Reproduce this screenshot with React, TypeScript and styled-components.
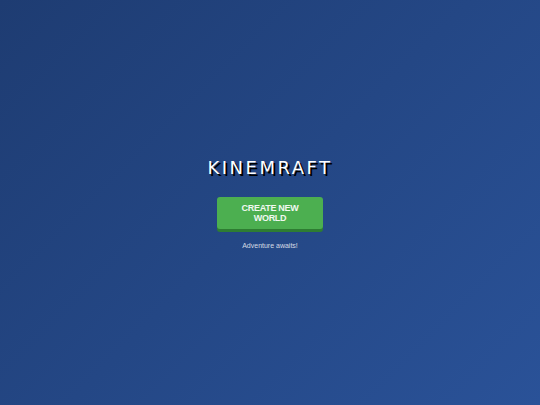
import styled, { createGlobalStyle } from "styled-components";

const GlobalStyle = createGlobalStyle`
  html, body {
    margin: 0;
    padding: 0;
    height: 100%;
  }
  #root {
    height: 100%;
  }
`;

const Screen = styled.div`
  width: 100%;
  height: 100vh;
  display: flex;
  flex-direction: column;
  align-items: center;
  justify-content: center;
  background: linear-gradient(135deg, #1e3c72 0%, #2a5298 100%);
  font-family: "Liberation Sans", Arial, sans-serif;
`;

const Title = styled.h1`
  margin: 0 0 18px;
  font-family: "DejaVu Sans", Verdana, sans-serif;
  font-weight: normal;
  font-size: 18px;
  line-height: 22px;
  letter-spacing: 2.5px;
  color: #fff;
  text-shadow: 2px 2px 0 #000;
`;

const Button = styled.button`
  width: 106px;
  padding: 6px 10px;
  border: none;
  border-radius: 3px;
  background: #4caf50;
  box-shadow: 0 3px 0 #2e7d32;
  color: #f1f8f1;
  font-family: "Liberation Sans", Arial, sans-serif;
  font-weight: bold;
  font-size: 9px;
  letter-spacing: -0.3px;
  line-height: 10px;
  cursor: pointer;
`;

const Tagline = styled.p`
  margin: 13px 0 0;
  font-size: 7px;
  color: rgba(255, 255, 255, 0.8);
`;

export default function App() {
  return (
    <>
      <GlobalStyle />
      <Screen>
        <Title>KINEMRAFT</Title>
        <Button>CREATE NEW WORLD</Button>
        <Tagline>Adventure awaits!</Tagline>
      </Screen>
    </>
  );
}
